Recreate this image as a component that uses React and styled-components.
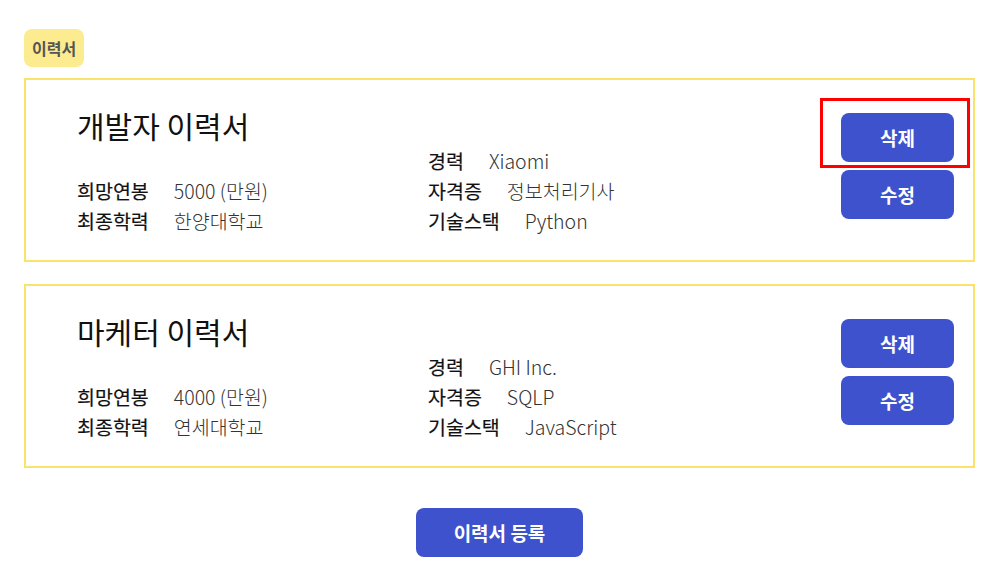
import React from "react";
import styled, { createGlobalStyle } from "styled-components";

const Global = createGlobalStyle`
  body {
    margin: 0;
    background: #ffffff;
    font-family: "Noto Sans CJK KR", "Noto Sans", sans-serif;
    color: #222;
  }
`;

const Page = styled.div`
  width: 951px;
  margin-left: 24px;
  padding-top: 29px;
  display: flex;
  flex-direction: column;
`;

const Badge = styled.div`
  align-self: flex-start;
  background: #fdeb8f;
  color: #555;
  font-weight: 700;
  font-size: 16px;
  line-height: 20px;
  padding: 9px 8px;
  border-radius: 8px;
  margin-bottom: 11px;
`;

const List = styled.div`
  display: flex;
  flex-direction: column;
  gap: 22px;
`;

const Card = styled.div`
  border: 2px solid #fae36b;
  display: flex;
  padding: 24px 19px 24px 51px;
`;

const Content = styled.div`
  flex: 1;
  display: flex;
  flex-direction: column;
`;

const Title = styled.h2`
  margin: 0;
  font-size: 30px;
  font-weight: 400;
  line-height: 42px;
  color: #111;
`;

const Columns = styled.div`
  display: grid;
  grid-template-columns: 351px 1fr;
  align-items: end;
`;

const Col = styled.div`
  display: flex;
  flex-direction: column;
`;

const Row = styled.div`
  display: flex;
  font-size: 19.5px;
  line-height: 30px;
`;

const Label = styled.span`
  font-weight: 400;
  color: #111;
  margin-right: 25px;
  -webkit-text-stroke: 0.2px #111;
`;

const Value = styled.span`
  font-weight: 300;
  color: #333;
`;

const Actions = styled.div`
  display: flex;
  flex-direction: column;
  gap: 8px;
  margin-top: 9px;
`;

const Button = styled.button`
  position: relative;
  width: ${(p) => p.$w || 113}px;
  height: 49px;
  border: none;
  border-radius: 8px;
  background: #3d52cc;
  color: #fff;
  font-family: "Noto Sans CJK KR", "Noto Sans", sans-serif;
  font-weight: 700;
  font-size: 19px;
  cursor: pointer;
`;

const Highlight = styled.span`
  position: absolute;
  left: -21px;
  top: -15px;
  width: 150px;
  height: 70px;
  box-sizing: border-box;
  border: 3px solid #ff0000;
  pointer-events: none;
`;

const Footer = styled.div`
  display: flex;
  justify-content: center;
  margin-top: 40px;
`;

const resumes = [
  {
    title: "개발자 이력서",
    salary: "5000 (만원)",
    edu: "한양대학교",
    career: "Xiaomi",
    cert: "정보처리기사",
    stack: "Python",
    highlight: true,
  },
  {
    title: "마케터 이력서",
    salary: "4000 (만원)",
    edu: "연세대학교",
    career: "GHI Inc.",
    cert: "SQLP",
    stack: "JavaScript",
  },
];

export default function App() {
  return (
    <>
      <Global />
      <Page>
        <Badge>이력서</Badge>
        <List>
          {resumes.map((r) => (
            <Card key={r.title}>
              <Content>
                <Title>{r.title}</Title>
                <Columns>
                  <Col>
                    <Row>
                      <Label>희망연봉</Label>
                      <Value>{r.salary}</Value>
                    </Row>
                    <Row>
                      <Label>최종학력</Label>
                      <Value>{r.edu}</Value>
                    </Row>
                  </Col>
                  <Col>
                    <Row>
                      <Label>경력</Label>
                      <Value>{r.career}</Value>
                    </Row>
                    <Row>
                      <Label>자격증</Label>
                      <Value>{r.cert}</Value>
                    </Row>
                    <Row>
                      <Label>기술스택</Label>
                      <Value>{r.stack}</Value>
                    </Row>
                  </Col>
                </Columns>
              </Content>
              <Actions>
                <Button>
                  삭제
                  {r.highlight && <Highlight />}
                </Button>
                <Button>수정</Button>
              </Actions>
            </Card>
          ))}
        </List>
        <Footer>
          <Button $w={167}>이력서 등록</Button>
        </Footer>
      </Page>
    </>
  );
}
